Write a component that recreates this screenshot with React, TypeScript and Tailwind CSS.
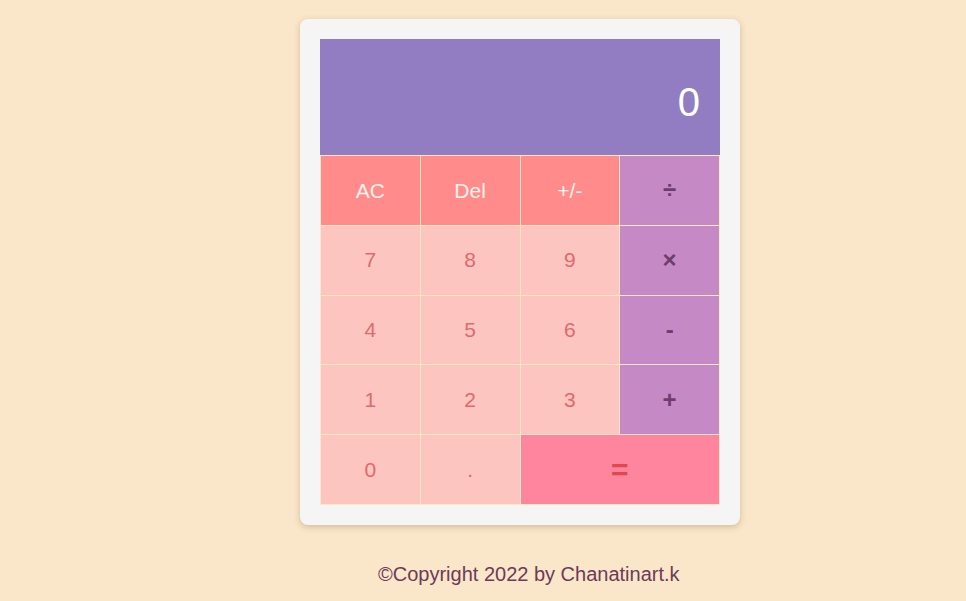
import React from "react";

const num = "bg-[#fcc5c0] text-[#e06a6d]";
const top = "bg-[#ff8b8a] text-[#fff3ee]";
const op = "bg-[#c589c5] text-[#6e3d6e] text-[24px] font-bold";

export default function App() {
  const keys: { label: string; cls: string; span?: boolean }[] = [
    { label: "AC", cls: top },
    { label: "Del", cls: top },
    { label: "+/-", cls: top },
    { label: "÷", cls: op },
    { label: "7", cls: num },
    { label: "8", cls: num },
    { label: "9", cls: num },
    { label: "×", cls: op },
    { label: "4", cls: num },
    { label: "5", cls: num },
    { label: "6", cls: num },
    { label: "-", cls: op },
    { label: "1", cls: num },
    { label: "2", cls: num },
    { label: "3", cls: num },
    { label: "+", cls: op },
    { label: "0", cls: num },
    { label: ".", cls: num },
    { label: "=", cls: "bg-[#ff859e] text-[#e2474c] text-[30px] font-bold", span: true },
  ];
  return (
    <div
      className="min-h-[601px] w-full bg-[#fae6c8] pt-[19px]"
      style={{ fontFamily: '"Liberation Sans", Arial, sans-serif' }}
    >
      <div className="ml-[300px] w-[440px] rounded-lg bg-[#f6f5f5] p-[20px] shadow-[0_2px_6px_rgba(120,90,60,0.3)]">
        <div className="flex h-[116px] items-center justify-end bg-[#927dc2] pr-[20px] pt-[10px] text-[40px] text-white">
          0
        </div>
        <div className="grid h-[350px] grid-cols-4 grid-rows-5 gap-px bg-[#fde7c2] p-px">
          {keys.map((k) => (
            <div
              key={k.label}
              className={`flex items-center justify-center text-[21px] ${k.cls} ${k.span ? "col-span-2" : ""}`}
            >
              {k.label}
            </div>
          ))}
        </div>
      </div>
      <div className="mt-[34px] ml-[378px] text-[20px] text-[#6c3b5a]">©Copyright 2022 by Chanatinart.k</div>
    </div>
  );
}
